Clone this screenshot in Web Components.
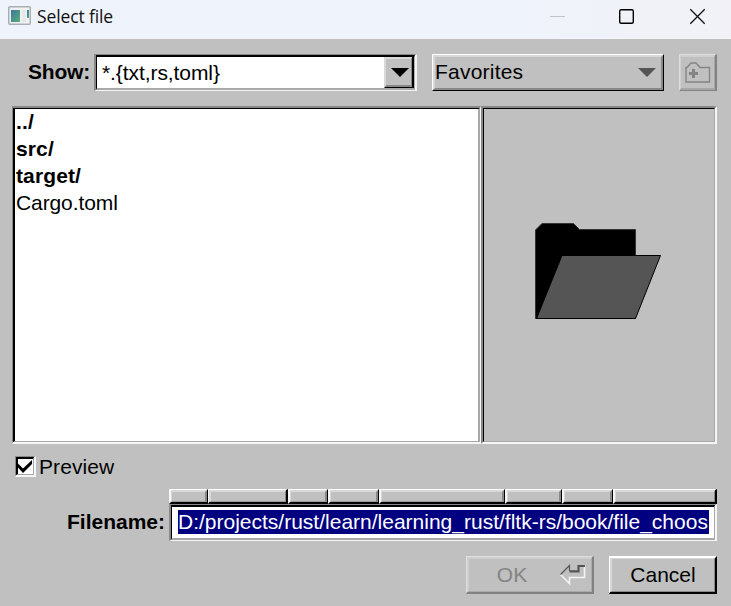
<!DOCTYPE html>
<html lang="en"><head><meta charset="utf-8"><title>Select file</title>
<style>
html,body{margin:0;height:100%;overflow:hidden;background:#c0c0c0}
body{font:21px/27px "Liberation Sans",Arial,sans-serif;color:#000}
</style></head><body>
<file-dialog></file-dialog>
<script>
const define=(name,html)=>{
  const t=document.createElement('template');t.innerHTML=html;
  customElements.define(name,class extends HTMLElement{
    constructor(){super();this.attachShadow({mode:'open'}).append(t.content.cloneNode(true));}
  });
};

// Two-step bevelled frame; widths and colours come from custom properties.
define('bevel-box',`<style>
:host{display:flex;box-sizing:border-box;border-style:solid;
 border-width:var(--ow,1px);border-color:var(--oc,#fff #000 #000 #fff)}
.in{flex:1;min-width:0;display:flex;align-items:center;box-sizing:border-box;border-style:solid;
 border-width:var(--iw,2px);border-color:var(--ic,#d8d8d8 #888 #888 #d8d8d8);background:var(--fill,#c0c0c0);overflow:hidden}
</style><div class="in"><slot></slot></div>`);

define('title-bar',`<style>
:host{display:flex;height:39px;box-sizing:border-box;background:linear-gradient(90deg,#eff3fb 70%,#f1f1f6);
 font:17.5px/33px "Open Sans","Noto Sans",sans-serif;color:#111;padding-left:8px}
.icon{margin-top:6px;width:23px;height:19px}
.name{margin-left:6px;flex:1;white-space:nowrap;letter-spacing:-.12px}
.ctl{width:160px;height:34px;margin-right:21px}
</style>
<svg class="icon" viewBox="0 0 23 19"><defs><linearGradient id="g" x2="1" y2="1"><stop stop-color="#3d75a0"/><stop offset="1" stop-color="#5aae78"/></linearGradient></defs>
<rect x=".75" y=".75" width="21.5" height="17.5" rx="1" fill="#f0f2f2" stroke="#a9afb3" stroke-width="1.5"/>
<path d="M3 4h9v12H3z" fill="url(#g)"/><path d="M14 4h4v7h-4zM14 12h4v4h-4z" fill="#e4e7e7"/><path d="M19 4h2v8h-2z" fill="url(#g)"/></svg>
<span class="name">Select file</span>
<svg class="ctl" viewBox="550 0 160 34" fill="none"><path d="M550 16.5h15" stroke="#c2c4c9"/>
<rect x="619.7" y="9.7" width="13.6" height="13.6" rx="1.5" stroke="#000" stroke-width="1.4"/>
<path d="M690.3 9.3l14.4 14.4M704.7 9.3l-14.4 14.4" stroke="#111" stroke-width="1.3"/></svg>`);

define('filter-combo',`<style>
:host{display:flex;width:323px}
bevel-box{flex:1}
.frame{--ow:1px 2px 1px 2px;--oc:#888 #f4f4f4 #f4f4f4 #888;--iw:2px 1px 2px 1px;--ic:#000 #b0b0b0 #a8a8a8 #000;--fill:#fff}
.text{flex:1;padding:0 0 1px 5px;letter-spacing:-.08px}
.drop{flex:none;width:30px;height:31px;--ow:0 2px 1px 1px;--oc:#d8d8d8 #000 #000 #d8d8d8;--iw:2px 1px 2px 1px;--ic:#d8d8d8 #888 #888 #d8d8d8;--fill:#c0c0c0}
svg{width:18px;height:9px;margin:0 0 0 5px;flex:none}
</style><bevel-box class="frame"><span class="text"><slot></slot></span>
<bevel-box class="drop"><svg viewBox="0 0 18 9"><path d="M0 0h18L9 9z"/></svg></bevel-box></bevel-box>`);

define('favorites-menu',`<style>
:host{display:flex;width:232px}bevel-box{flex:1}
span{flex:1;letter-spacing:.22px;padding-bottom:2px}svg{width:18px;height:9px;margin-right:5px}
</style><bevel-box><span><slot></slot></span><svg viewBox="0 0 18 9"><path d="M0 0h18L9 9z" fill="#555"/></svg></bevel-box>`);

define('new-folder-button',`<style>
:host{display:flex;width:38px}
bevel-box{flex:1;--oc:#dedede #828282 #828282 #dedede;--ow:1px 2px 1px 1px;--ic:#cfcfcf #a7a7a7 #a7a7a7 #cfcfcf;--iw:2px 1px 2px 1px}
svg{width:26px;height:23px;margin:0 0 0 4px;flex:none}
</style><bevel-box><svg viewBox="0 0 26 23" fill="none" stroke="#848484"><path d="M1 21V6.500h1L6 2h5l4 4.500h9.500V21z" stroke-width="1.4"/><path d="M4 12.500h9M8.500 8v9" stroke-width="3"/></svg></bevel-box>`);

define('file-list',`<style>
:host{display:flex;width:469px}
bevel-box{flex:1;--ow:2px 1px 2px 1px;--oc:#888 #f6f6f6 #f6f6f6 #888;--iw:1px 2px 1px 2px;--ic:#000 #a8a8a8 #a8a8a8 #000;--fill:#fff}
div{align-self:flex-start;padding-left:1px;margin-top:-1px}
</style><bevel-box><div><slot></slot></div></bevel-box>`);
define('file-row',`<style>:host{display:block;height:27px;letter-spacing:-.1px}:host([dir-entry]){font-weight:bold;letter-spacing:.12px}</style><slot></slot>`);

define('preview-pane',`<style>
:host{display:flex;flex:1}
bevel-box{flex:1;--ow:2px;--oc:#888 #f6f6f6 #f6f6f6 #888;--iw:1px;--ic:#000 #a8a8a8 #a8a8a8 #000}
svg{width:128px;height:98px;margin:-8px 0 0 50px;flex:none}
</style><bevel-box><svg viewBox="534 222 128 98"><path d="M535.500 318.500V230l6.500-6.500h31.500l6 6h56v89z" stroke="#333"/>
<path d="M536.500 318.500L562 255.500h98.500L635.500 318.500z" fill="#555" stroke="#000"/></svg></bevel-box>`);

define('check-option',`<style>
:host{display:flex;align-items:center;gap:3px;letter-spacing:.1px}
bevel-box{width:21px;height:21px;--ow:1px 2px 2px 1px;--oc:#888 #f6f6f6 #f6f6f6 #888;--iw:2px 1px 1px 2px;--ic:#000 #a8a8a8 #a8a8a8 #000;--fill:#fff}
svg{width:15px;height:15px;flex:none}
</style><bevel-box><svg viewBox="18 459 15 15"><path d="M18 463.500v4l5 5.500 9-9v-4l-9 8.500z"/></svg></bevel-box><slot></slot>`);

define('path-crumbs',`<style>
:host{display:grid;height:15px;grid-template-columns:39px 80px 40px 51px 126px 57px 51px 104px}
bevel-box{--ow:1px 1px 2px 2px;--oc:#fff #000 #000 #f6f6f6;--iw:2px 2px 1px 1px;--ic:#d8d8d8 #888 #999 #d8d8d8}
.w{--ow:1px 2px 2px 1px;--iw:2px 1px 1px 2px}
.last{--ow:1px 2px 2px 2px;--iw:2px 1px 1px 1px}
</style><bevel-box></bevel-box><bevel-box class="w"></bevel-box><bevel-box></bevel-box><bevel-box></bevel-box><bevel-box></bevel-box><bevel-box></bevel-box><bevel-box></bevel-box><bevel-box class="last"></bevel-box>`);

define('filename-input',`<style>
:host{display:flex;height:37px}
bevel-box{flex:1;--ow:1px 2px 1px 2px;--oc:#888 #f6f6f6 #f6f6f6 #888;--iw:2px 1px 2px 1px;--ic:#000 #a8a8a8 #a8a8a8 #000;--fill:#fff}
span{margin:0 0 2px 6px;width:531px;height:24px;line-height:24px;background:#000080;color:#fff;white-space:nowrap;overflow:hidden}
</style><bevel-box><span><slot></slot></span></bevel-box>`);

define('dialog-button',`<style>
:host{display:flex;height:38px;width:108px}
bevel-box{flex:1;--ow:2px 2px 2px 1px;--iw:1px 1px 1px 2px}
:host([disabled]){width:128px;color:#848484}
:host([disabled]) bevel-box{--ow:1px 2px 2px 1px;--oc:#dedede #828282 #828282 #dedede;--iw:2px 1px 1px 2px;--ic:#cfcfcf #aaa #aaa #cfcfcf}
span{flex:1;text-align:center;padding-bottom:2px}
svg{display:none;width:28px;height:22px;flex:none;margin-right:4px}
:host([disabled]) svg{display:block}
:host([disabled]) span{padding-right:4px}
</style><bevel-box><span><slot></slot></span><svg viewBox="559 564 28 22" fill="none"><path d="M560.500 574.500L569.500 583.500V577.500H584.500V565" stroke="#f4f4f4" stroke-width="1.6"/><path d="M569.500 571.300H578.500V566H585" stroke="#555" stroke-width="2.200"/><path d="M560.500 574.500L569.500 565.500V571" stroke="#555" stroke-width="1.200"/></svg></bevel-box>`);

define('file-dialog',`<style>
:host{display:flex;flex-direction:column;height:606px;width:731px;background:#c0c0c0}
.bar{display:flex;height:37px;padding:15px 14px 0 28px}
.bar b{width:66px;line-height:35px;flex:none;letter-spacing:-.2px}
favorites-menu{margin-left:15px}new-folder-button{margin-left:15px}
.body{display:flex;height:338px;padding:15px 14px 0 12px}
check-option{margin:12px 0 0 15px;height:21px}
.name{display:grid;grid-template-columns:169px 548px;margin-top:12px}
.name path-crumbs{grid-column:2}
.name b{text-align:right;padding-right:4px;line-height:35px}
.acts{display:flex;justify-content:flex-end;gap:15px;padding:15px 14px 0 0}
</style>
<title-bar></title-bar>
<div class="bar"><b>Show:</b><filter-combo>*.{txt,rs,toml}</filter-combo><favorites-menu>Favorites</favorites-menu><new-folder-button></new-folder-button></div>
<div class="body"><file-list><file-row dir-entry>../</file-row><file-row dir-entry>src/</file-row><file-row dir-entry>target/</file-row><file-row>Cargo.toml</file-row></file-list><preview-pane></preview-pane></div>
<check-option>Preview</check-option>
<div class="name"><path-crumbs></path-crumbs><b>Filename:</b><filename-input>D:/projects/rust/learn/learning_rust/fltk-rs/book/file_choos</filename-input></div>
<div class="acts"><dialog-button disabled>OK</dialog-button><dialog-button>Cancel</dialog-button></div>`);
</script></body></html>
